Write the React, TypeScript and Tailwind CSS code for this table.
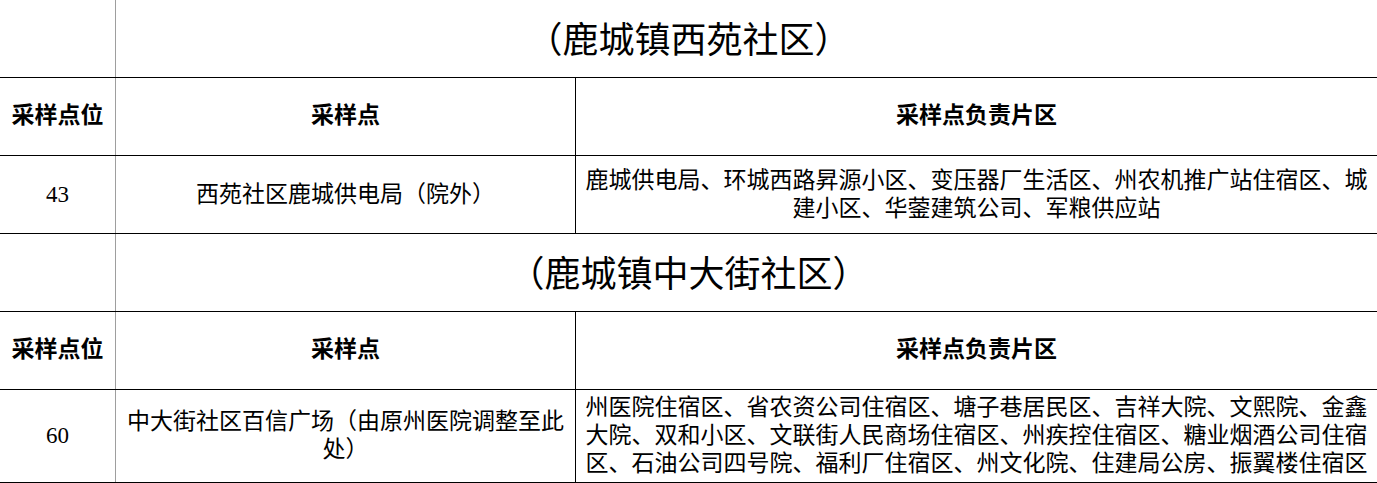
import React from "react";

const font = { fontFamily: '"Liberation Serif", "Noto Sans CJK SC", serif' };

function TitleRow({ text }: { text: string }) {
  return (
    <div className="flex h-[78px] border-b border-black">
      <div className="w-[116px] shrink-0 border-r border-[#9e9e9e]" />
      <div className="flex flex-1 items-center justify-center pt-[5px] pr-[116px] text-[36px] leading-none">
        {text}
      </div>
    </div>
  );
}

function HeaderRow() {
  return (
    <div className="flex h-[78px] border-b border-black text-[23px] font-bold">
      <div className="flex w-[116px] shrink-0 items-center justify-center border-r border-[#9e9e9e]">
        采样点位
      </div>
      <div className="flex w-[460px] shrink-0 items-center justify-center border-r border-black">
        采样点
      </div>
      <div className="flex flex-1 items-center justify-center">采样点负责片区</div>
    </div>
  );
}

function DataRow({ no, site, area, h }: { no: string; site: string; area: string; h: string }) {
  return (
    <div className={`flex border-b border-black text-[23px] leading-[28px] ${h}`}>
      <div className="flex w-[116px] shrink-0 items-center justify-center border-r border-[#9e9e9e]">
        {no}
      </div>
      <div className="flex w-[460px] shrink-0 items-center justify-center border-r border-black px-[1px] text-center">
        {site}
      </div>
      <div className="flex flex-1 items-center justify-center px-[8px] text-center">{area}</div>
    </div>
  );
}

export default function App() {
  return (
    <div className="h-[483px] w-[1377px] overflow-hidden bg-white text-black" style={font}>
      <TitleRow text="（鹿城镇西苑社区）" />
      <HeaderRow />
      <DataRow
        h="h-[78px]"
        no="43"
        site="西苑社区鹿城供电局（院外）"
        area="鹿城供电局、环城西路昇源小区、变压器厂生活区、州农机推广站住宿区、城建小区、华蓥建筑公司、军粮供应站"
      />
      <TitleRow text="（鹿城镇中大街社区）" />
      <HeaderRow />
      <DataRow
        h="h-[93px]"
        no="60"
        site="中大街社区百信广场（由原州医院调整至此处）"
        area="州医院住宿区、省农资公司住宿区、塘子巷居民区、吉祥大院、文熙院、金鑫大院、双和小区、文联街人民商场住宿区、州疾控住宿区、糖业烟酒公司住宿区、石油公司四号院、福利厂住宿区、州文化院、住建局公房、振翼楼住宿区"
      />
    </div>
  );
}
